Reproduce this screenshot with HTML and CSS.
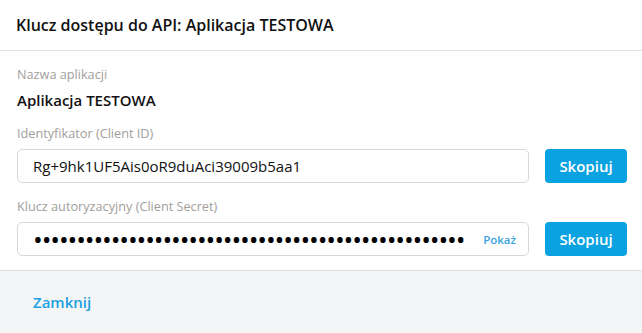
FILE: index.html
```html
<!DOCTYPE html>
<html lang="pl">

<head>
    <meta charset="UTF-8">
    <meta name="viewport" content="width=device-width, initial-scale=1.0">
    <title>Klucz dostępu do API</title>

    <link rel="stylesheet" href="styles.css">
</head>

<body>

    <div class="modal">
        <div class="modal-header">
            <h2 class="modal-title">Klucz dostępu do API: Aplikacja TESTOWA</h2>
        </div>

        <div class="modal-body">
            <div class="field">
                <span class="label">Nazwa aplikacji</span>
                <span class="value">Aplikacja TESTOWA</span>
            </div>

            <div class="field">
                <span class="label">Identyfikator (Client ID)</span>
                <div class="row">
                    <div class="input">Rg+9hk1UF5Ais0oR9duAci39009b5aa1</div>
                    <button class="btn">Skopiuj</button>
                </div>
            </div>

            <div class="field">
                <span class="label">Klucz autoryzacyjny (Client Secret)</span>
                <div class="row">
                    <div class="input">
                        <span class="dots">••••••••••••••••••••••••••••••••••••••••••••••••••</span>
                        <a class="show" href="#">Pokaż</a>
                    </div>
                    <button class="btn">Skopiuj</button>
                </div>
            </div>
        </div>

        <div class="modal-footer">
            <a class="close" href="#">Zamknij</a>
        </div>
    </div>

</body>

</html>
```

FILE: styles.css
```css
body {
    margin: 0;
    background: #fff;
    font-family: "Open Sans", sans-serif;
    color: #111;
}

.modal {
    width: 642px;
}

.modal-header {
    height: 50px;
    padding: 0 16px;
    display: flex;
    align-items: center;
    border-bottom: 1px solid #e3e3e3;
}

.modal-title {
    margin: 0;
    font-size: 16px;
    font-weight: 600;
}

.modal-body {
    padding: 15px 15px 14px 17px;
    display: flex;
    flex-direction: column;
    gap: 15px;
}

.field {
    display: flex;
    flex-direction: column;
    gap: 8px;
}

.label {
    font-size: 12.7px;
    line-height: 16px;
    color: #a29e9b;
}

.value {
    font-size: 15px;
    line-height: 20px;
    font-weight: 600;
}

.row {
    display: flex;
    gap: 16px;
}

.input {
    flex: 1;
    height: 32px;
    padding: 0 12px 0 15px;
    display: flex;
    align-items: center;
    justify-content: space-between;
    border: 1px solid #d8d8d8;
    border-radius: 5px;
    font-size: 15px;
}

.dots {
    font-size: 26px;
    line-height: 1;
    letter-spacing: -1.15px;
    color: #000;
}

.show {
    font-size: 11.5px;
    font-weight: 600;
    color: #3aa3e0;
    text-decoration: none;
}

.btn {
    width: 82px;
    height: 34px;
    border: 0;
    border-radius: 4px;
    background: #0aa2e0;
    color: #fff;
    font-family: inherit;
    font-size: 15px;
    font-weight: 600;
}

.modal-footer {
    height: 62px;
    padding: 0 33px;
    display: flex;
    align-items: center;
    background: #f4f5f7;
    border-top: 1px solid #dfe0e2;
}

.close {
    font-size: 15px;
    font-weight: 600;
    color: #1aa0e0;
    text-decoration: none;
}
```
